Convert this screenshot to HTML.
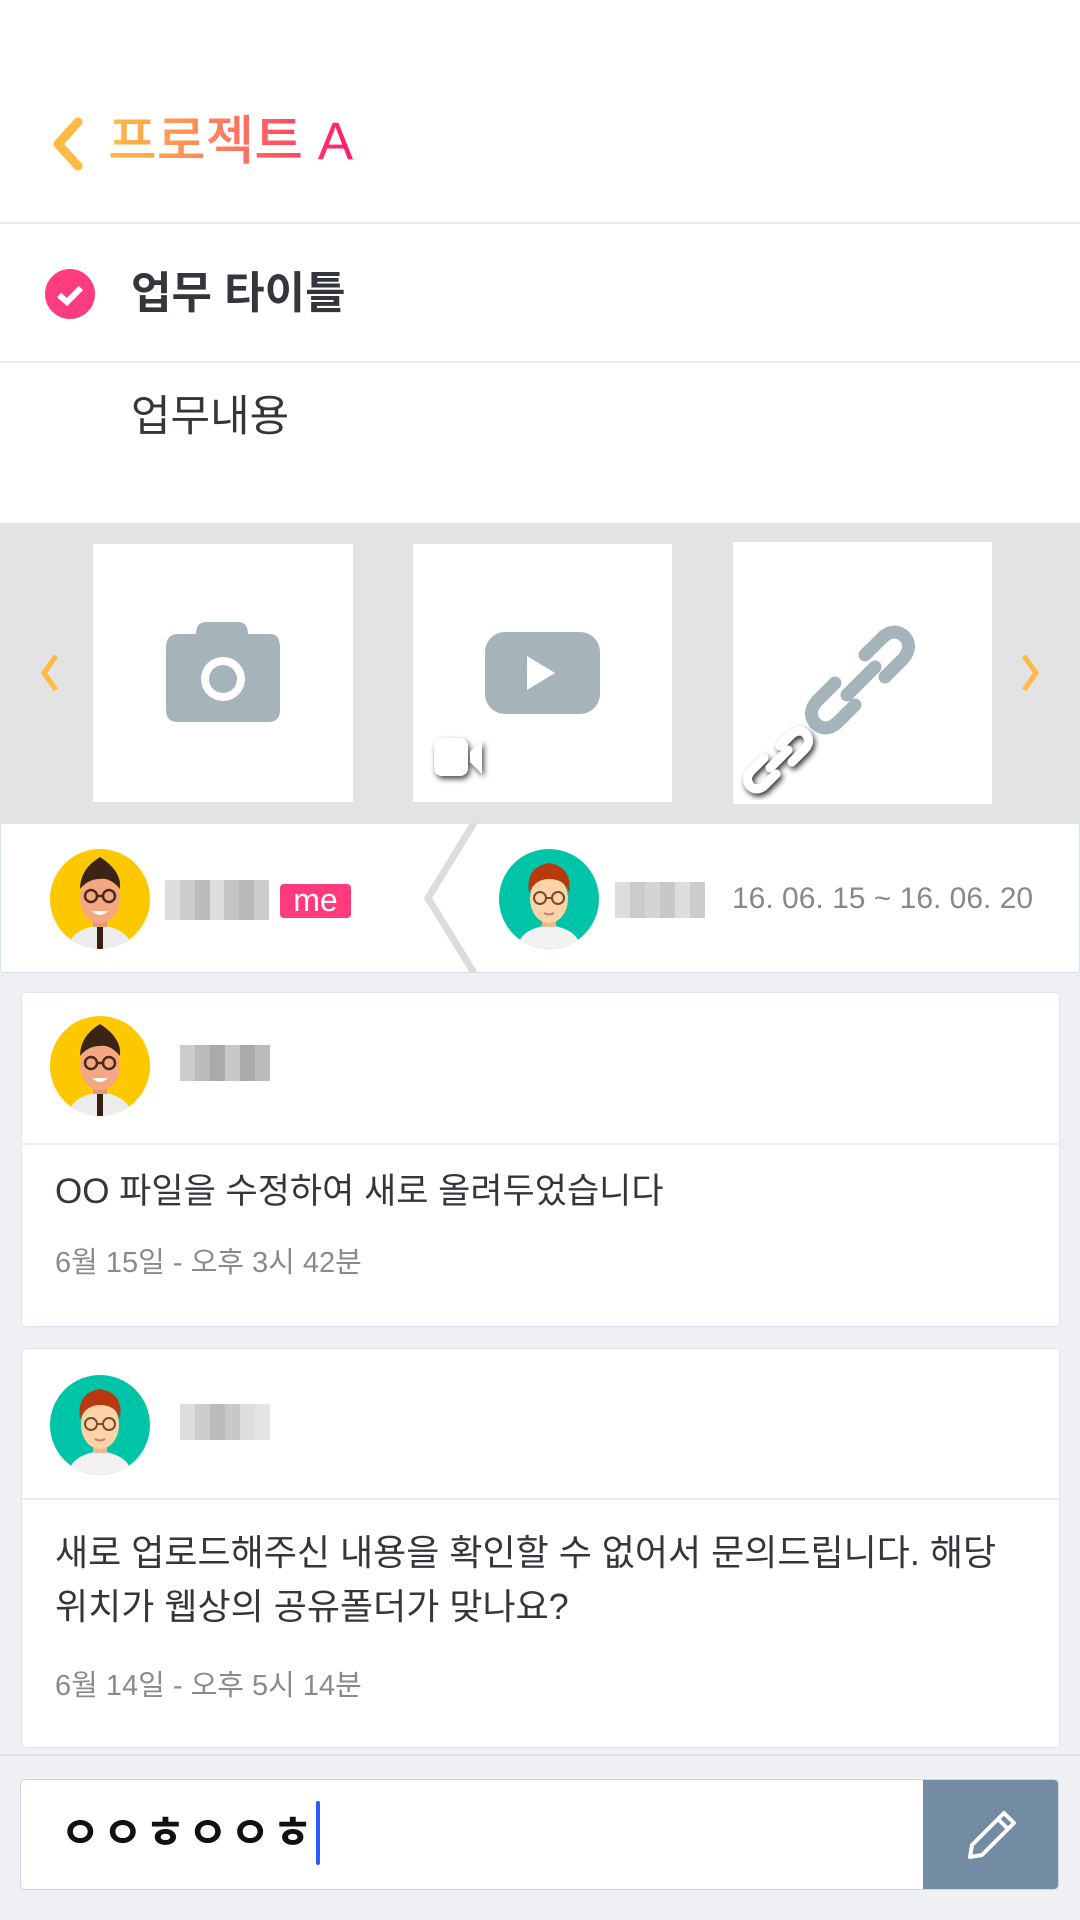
<!DOCTYPE html>
<html><head><meta charset="utf-8"><style>
*{margin:0;padding:0;box-sizing:border-box}
body{width:1080px;height:1920px;background:#eef0f4;font-family:"Liberation Sans","Noto Sans CJK KR",sans-serif;position:relative;overflow:hidden;color:#333}
.abs{position:absolute}
.blur{position:absolute;display:flex}
.blur i{display:block;width:15px;height:100%}
</style></head><body>
<div class="abs" style="left:0;top:0;width:1080px;height:523px;background:#fff"></div>
<svg class="abs" style="left:48px;top:116px" width="40" height="56" viewBox="0 0 40 56"><path d="M30 6 L10 28 L30 50" stroke="#ffba44" stroke-width="9" fill="none" stroke-linecap="round" stroke-linejoin="round"/></svg>
<div class="abs" style="left:108px;top:108px;font-size:53px;line-height:68px;font-weight:500;background:linear-gradient(90deg,#ffbb44,#ff7a60 50%,#ff1a6a);-webkit-background-clip:text;background-clip:text;color:transparent">프로젝트 A</div>
<div class="abs" style="left:0;top:222px;width:1080px;height:2px;background:#e3ebf3"></div>
<svg class="abs" style="left:45px;top:269px" width="50" height="50"><circle cx="25" cy="25" r="25" fill="#ff3c7e"/><path d="M14 26 L22 33 L36 19" stroke="#fff" stroke-width="6" fill="none"/></svg>
<div class="abs" style="left:131px;top:266px;font-size:44px;line-height:56px;font-weight:bold;color:#33373b">업무 타이틀</div>
<div class="abs" style="left:0;top:361px;width:1080px;height:2px;background:#e3ebf3"></div>
<div class="abs" style="left:131px;top:389px;font-size:43px;line-height:56px;color:#33373b">업무내용</div>
<div class="abs" style="left:0;top:523px;width:1080px;height:300px;background:#e3e3e3"></div>
<svg class="abs" style="left:36px;top:652px" width="26" height="42"><path d="M20 4 L8 21 L20 38" stroke="#ffba44" stroke-width="5" fill="none"/></svg>
<svg class="abs" style="left:1018px;top:652px" width="26" height="42"><path d="M6 4 L18 21 L6 38" stroke="#ffba44" stroke-width="5" fill="none"/></svg>
<div class="abs" style="left:93px;top:544px;width:260px;height:258px;background:#fff"></div>
<div class="abs" style="left:413px;top:544px;width:259px;height:258px;background:#fff"></div>
<div class="abs" style="left:733px;top:542px;width:259px;height:262px;background:#fff"></div>
<svg class="abs" style="left:166px;top:622px" width="114" height="100"><path d="M30 12 Q30 0 40 0 H72 Q82 0 82 12 H104 Q114 12 114 26 V88 Q114 100 102 100 H12 Q0 100 0 88 V26 Q0 12 12 12 Z" fill="#a5b4bb"/><circle cx="57" cy="57" r="22" fill="#fff"/><circle cx="57" cy="57" r="14" fill="#a5b4bb"/></svg>
<svg class="abs" style="left:485px;top:632px" width="115" height="82"><rect width="115" height="82" rx="20" fill="#a5b4bb"/><path d="M42 24 L70 41 L42 58 Z" fill="#fff"/></svg>
<svg class="abs" style="left:426px;top:732px" width="70" height="56"><defs><filter id="sh" x="-30%" y="-30%" width="160%" height="160%"><feDropShadow dx="2" dy="3" stdDeviation="3" flood-color="#000" flood-opacity="0.7"/></filter></defs><g filter="url(#sh)" fill="#fff"><rect x="8" y="6" width="34" height="38" rx="8"/><path d="M44 20 L56 8 V42 L44 30Z"/></g></svg>
<svg class="abs" style="left:805px;top:625px" width="112" height="110" viewBox="0 0 112 110"><g fill="none" stroke="#a5b4bb" stroke-width="13" stroke-linecap="round"><path d="M60 30 L78 12 Q90 2 100 12 Q108 22 98 34 L80 52"/><path d="M50 80 L32 98 Q20 108 10 98 Q2 88 12 76 L30 58"/><path d="M42 70 L70 42"/></g></svg>
<svg class="abs" style="left:740px;top:720px" width="80" height="80" viewBox="-4 -4 80 80"><defs><filter id="sh2" x="-30%" y="-30%" width="160%" height="160%"><feDropShadow dx="2" dy="3" stdDeviation="3" flood-color="#000" flood-opacity="0.8"/></filter></defs><g fill="none" stroke="#fff" stroke-width="9" stroke-linecap="round" filter="url(#sh2)"><path d="M36 22 L48 10 Q56 4 62 10 Q68 18 60 26 L48 38"/><path d="M32 50 L20 62 Q12 68 6 62 Q0 54 8 46 L20 34"/><path d="M26 44 L44 26"/></g></svg>
<!-- people bar -->
<div class="abs" style="left:0;top:823px;width:1080px;height:150px;background:#fff;border:1px solid #d6e2ee;border-radius:3px"></div>
<svg class="abs" style="left:410px;top:823px" width="80" height="150"><path d="M64 0 L18 75 L64 150" stroke="#dcdcdc" stroke-width="7" fill="none"/></svg>
<svg width="0" height="0" style="position:absolute"><defs>
<g id="av1"><circle cx="50" cy="50" r="50" fill="#fdc800"/><clipPath id="c1"><circle cx="50" cy="50" r="50"/></clipPath><g clip-path="url(#c1)"><path d="M18 100 Q20 80 50 76 Q80 80 82 100Z" fill="#ececec"/><rect x="47" y="76" width="6" height="24" fill="#3b1e12"/><rect x="43" y="66" width="14" height="12" fill="#e39a78"/><ellipse cx="50" cy="50" rx="20" ry="24" fill="#f4a882"/><path d="M30 40 Q30 20 50 8 Q72 22 70 40 Q60 28 50 30 Q38 30 30 40Z" fill="#3b2414"/><g fill="none" stroke="#4a2a1a" stroke-width="2.5"><circle cx="41" cy="47" r="6"/><circle cx="59" cy="47" r="6"/><path d="M47 47 H53"/></g><path d="M42 62 Q50 70 58 62Z" fill="#fff"/></g></g>
<g id="av2"><circle cx="50" cy="50" r="50" fill="#00c4a8"/><clipPath id="c2"><circle cx="50" cy="50" r="50"/></clipPath><g clip-path="url(#c2)"><path d="M18 100 Q20 80 50 76 Q80 80 82 100Z" fill="#f2f2f2"/><rect x="43" y="66" width="14" height="12" fill="#f0b890"/><ellipse cx="50" cy="50" rx="19" ry="24" fill="#ffd2a8"/><path d="M30 44 Q26 18 50 14 Q74 18 70 44 Q66 30 50 30 Q36 30 30 44Z" fill="#b9380e"/><g fill="none" stroke="#7a4a2a" stroke-width="2"><circle cx="41" cy="49" r="6"/><circle cx="59" cy="49" r="6"/><path d="M47 49 H53"/></g><path d="M45 64 Q50 67 55 64" stroke="#c77" stroke-width="2" fill="none"/></g></g>
</defs></svg>
<svg class="abs" style="left:50px;top:849px" width="100" height="100"><use href="#av1"/></svg>
<div class="blur" style="left:165px;top:880px;width:104px;height:40px"><i style="background:#ddd"></i><i style="background:#ccc"></i><i style="background:#bbb"></i><i style="background:#ddd"></i><i style="background:#c4c4c4"></i><i style="background:#b8b8b8"></i><i style="background:#ccc"></i></div>
<div class="abs" style="left:280px;top:884px;width:71px;height:34px;background:#ff3a7d;border-radius:4px;color:#fff;font-size:32px;line-height:32px;text-align:center">me</div>
<svg class="abs" style="left:499px;top:849px" width="100" height="100"><use href="#av2"/></svg>
<div class="blur" style="left:615px;top:882px;width:98px;height:36px"><i style="background:#ddd"></i><i style="background:#ccc"></i><i style="background:#d4d4d4"></i><i style="background:#c8c8c8"></i><i style="background:#ddd"></i><i style="background:#ccc"></i></div>
<div class="abs" style="left:732px;top:879px;font-size:30px;line-height:40px;color:#888">16. 06. 15 ~ 16. 06. 20</div>
<!-- card 1 -->
<div class="abs" style="left:21px;top:992px;width:1039px;height:335px;background:#fff;border:1px solid #dde4ec;border-radius:4px"></div>
<svg class="abs" style="left:50px;top:1016px" width="100" height="100"><use href="#av1"/></svg>
<div class="blur" style="left:180px;top:1045px;width:98px;height:36px"><i style="background:#ccc"></i><i style="background:#bbb"></i><i style="background:#aaa"></i><i style="background:#c8c8c8"></i><i style="background:#aaa"></i><i style="background:#bbb"></i></div>
<div class="abs" style="left:22px;top:1143px;width:1037px;height:2px;background:#e8eef4"></div>
<div class="abs" style="left:55px;top:1170px;font-size:35px;line-height:44px;color:#33373b">OO 파일을 수정하여 새로 올려두었습니다</div>
<div class="abs" style="left:55px;top:1245px;font-size:29px;line-height:36px;color:#8a8a8a">6월 15일 - 오후 3시 42분</div>
<!-- card 2 -->
<div class="abs" style="left:21px;top:1348px;width:1039px;height:400px;background:#fff;border:1px solid #dde4ec;border-radius:4px"></div>
<svg class="abs" style="left:50px;top:1375px" width="100" height="100"><use href="#av2"/></svg>
<div class="blur" style="left:180px;top:1404px;width:98px;height:36px"><i style="background:#ddd"></i><i style="background:#ccc"></i><i style="background:#bbb"></i><i style="background:#c8c8c8"></i><i style="background:#ddd"></i><i style="background:#e4e4e4"></i></div>
<div class="abs" style="left:22px;top:1498px;width:1037px;height:2px;background:#e8eef4"></div>
<div class="abs" style="left:55px;top:1526px;font-size:36px;line-height:54px;color:#33373b">새로 업로드해주신 내용을 확인할 수 없어서 문의드립니다. 해당<br>위치가 웹상의 공유폴더가 맞나요?</div>
<div class="abs" style="left:55px;top:1668px;font-size:29px;line-height:36px;color:#8a8a8a">6월 14일 - 오후 5시 14분</div>
<!-- input -->
<div class="abs" style="left:0;top:1754px;width:1080px;height:2px;background:#dfe3e8"></div>
<div class="abs" style="left:20px;top:1779px;width:1039px;height:111px;background:#fff;border:1px solid #c9d6e4;border-radius:5px;overflow:hidden"><div class="abs" style="right:0;top:0;width:135px;height:111px;background:#738ba3"></div></div>
<svg class="abs" style="left:960px;top:1805px" width="60" height="60"><path d="M10 52 L12 40 L44 8 L54 18 L22 50 Z M38 14 L48 24" stroke="#fff" stroke-width="4" fill="none" stroke-linejoin="round"/></svg>
<div class="abs" style="left:60px;top:1806px;font-size:44px;line-height:56px;color:#111;letter-spacing:2px;font-weight:bold">ㅇㅇㅎㅇㅇㅎ</div>
<div class="abs" style="left:316px;top:1801px;width:4px;height:64px;background:#2a5cff;border-radius:2px"></div>
</body></html>
